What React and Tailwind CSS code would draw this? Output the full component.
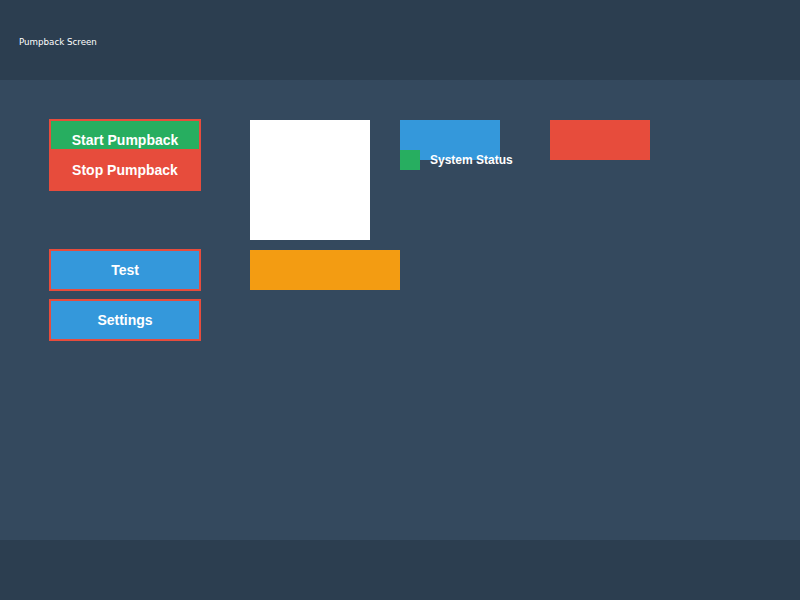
export default function App() {
  return (
    <div className="w-[800px] h-[600px] flex flex-col bg-[#34495e]" style={{ fontFamily: '"Liberation Sans", Arial, sans-serif' }}>
      <header className="h-[80px] shrink-0 bg-[#2c3e50] flex items-center px-[19px]">
        <span className="mt-[6px] text-[8.7px] text-white" style={{ fontFamily: '"DejaVu Sans", sans-serif' }}>Pumpback Screen</span>
      </header>
      <main className="flex-1 flex pt-[39px] pl-[49px]">
        <div className="w-[152px] flex flex-col">
          <button className="h-[42px] border-2 border-[#e74c3c] bg-[#27ae60] text-white font-bold text-[14px] flex items-center justify-center">Start Pumpback</button>
          <button className="h-[42px] -mt-[12px] border-2 border-[#e74c3c] bg-[#e74c3c] text-white font-bold text-[14px] flex items-center justify-center">Stop Pumpback</button>
          <button className="h-[42px] mt-[58px] border-2 border-[#e74c3c] bg-[#3498db] text-white font-bold text-[14px] flex items-center justify-center">Test</button>
          <button className="h-[42px] mt-[8px] border-2 border-[#e74c3c] bg-[#3498db] text-white font-bold text-[14px] flex items-center justify-center">Settings</button>
        </div>
        <div className="ml-[49px] pt-px flex flex-col gap-[10px]">
          <div className="flex items-start">
            <div className="w-[120px] h-[120px] bg-white" />
            <div className="ml-[30px] w-[100px] flex flex-col">
              <div className="w-[100px] h-[40px] bg-[#3498db]" />
              <div className="-mt-[10px] flex items-center gap-[10px]">
                <div className="w-[20px] h-[20px] bg-[#27ae60] shrink-0" />
                <span className="text-[12px] font-bold text-white whitespace-nowrap">System Status</span>
              </div>
            </div>
            <div className="ml-[50px] w-[100px] h-[40px] bg-[#e74c3c]" />
          </div>
          <div className="w-[150px] h-[40px] bg-[#f39c12]" />
        </div>
      </main>
      <footer className="h-[60px] shrink-0 bg-[#2c3e50]" />
    </div>
  );
}
